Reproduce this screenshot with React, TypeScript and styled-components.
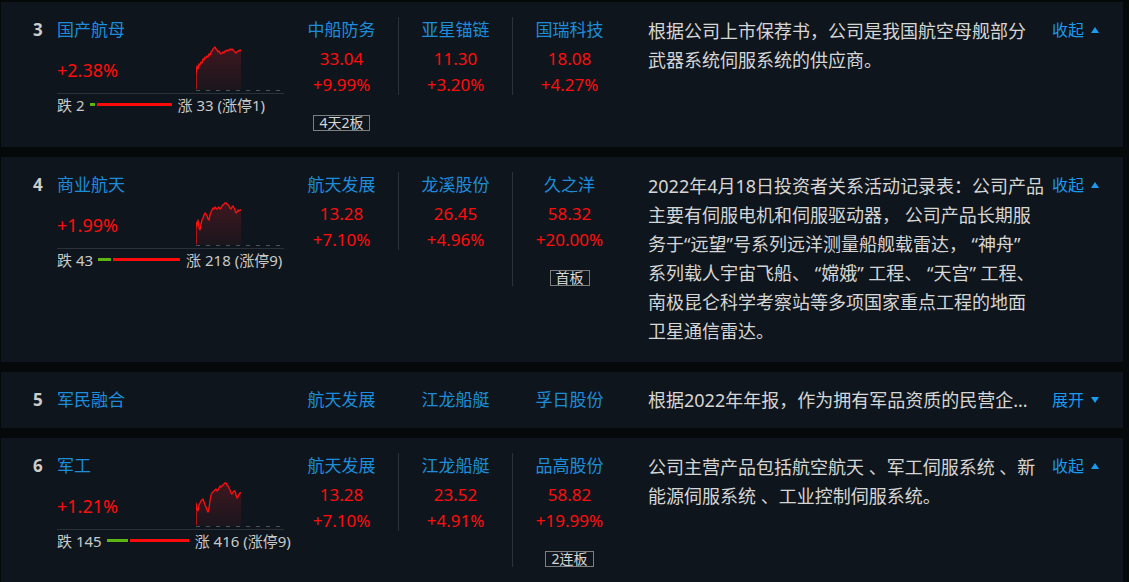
import React, { useState } from 'react';
import styled, { createGlobalStyle, css } from 'styled-components';

type Stock = { name: string; price: string; pct: string; tag?: string };
type Sector = {
  rank: number;
  name: string;
  pct: string;
  down: number;
  up: number;
  limitUp: number;
  spark: number[][];
  stocks: Stock[];
  desc: string[];
  summary: string;
};

const GlobalStyle = createGlobalStyle`
  body {
    margin: 0;
    background: #060909;
    font-family: "Noto Sans", "Noto Sans CJK SC", sans-serif;
  }
`;

const List = styled.div`
  display: flex;
  flex-direction: column;
  gap: 10px;
  padding: 2px 6px 0 1px;
`;

const Card = styled.div<{ $collapsed?: boolean }>`
  display: flex;
  align-items: ${({ $collapsed }) => ($collapsed ? 'center' : 'flex-start')};
  background: #0f151c;
  padding: ${({ $collapsed }) => ($collapsed ? '15px 26px 15px 32px' : '15px 26px 16px 32px')};
`;

const Rank = styled.div`
  width: 24px;
  flex: none;
  font-size: 17px;
  font-weight: 700;
  line-height: 26px;
  color: #cdcdcd;
`;

const SectorBox = styled.div`
  width: 227px;
  flex: none;
`;

const SectorName = styled.div`
  font-size: 17px;
  line-height: 26px;
  color: #1d8ddb;
`;

const ChartRow = styled.div`
  display: flex;
  justify-content: space-between;
  align-items: center;
  height: 50px;
  border-bottom: 1px solid #2a3138;
`;

const SectorPct = styled.div`
  font-size: 18px;
  padding-top: 4px;
  color: #ff0d0d;
`;

const Spark = styled.svg`
  display: block;
  align-self: flex-start;
  margin-top: 2px;
`;

const Breadth = styled.div`
  display: flex;
  align-items: center;
  height: 20px;
  font-size: 15px;
  color: #c9c9c9;
  white-space: nowrap;
`;

const BreadthBar = styled.div`
  display: flex;
  align-items: center;
  gap: 2px;
  margin: 0 6px 0 5px;
`;

const Seg = styled.div<{ $up?: boolean }>`
  height: 3px;
  background: ${({ $up }) => ($up ? '#ff0a0a' : '#5db511')};
`;

const Stocks = styled.div`
  display: flex;
  align-items: flex-start;
  width: 342px;
  flex: none;
`;

const StockCol = styled.div<{ $divider?: boolean }>`
  box-sizing: border-box;
  width: 114px;
  display: flex;
  flex-direction: column;
  align-items: center;
  border-left: 1px solid ${({ $divider }) => ($divider ? '#2b3239' : 'transparent')};
`;

const StockName = styled.div`
  font-size: 17px;
  line-height: 26px;
  color: #1d8ddb;
`;

const StockPrice = styled.div`
  padding-top: 2px;
  font-size: 17px;
  line-height: 27px;
  color: #ff0d0d;
`;

const StockPct = styled.div`
  font-size: 17px;
  line-height: 26px;
  margin-bottom: -3px;
  color: #ff0d0d;
`;

const Tag = styled.div`
  margin-top: 20px;
  padding: 0 5px;
  border: 1px solid #7f7f7f;
  font-size: 14px;
  line-height: 14px;
  color: #d6d6d6;
`;

const Desc = styled.div`
  width: 396px;
  flex: none;
  margin-left: 22px;
  font-size: 18px;
  line-height: 29px;
  color: #d6d6d6;
`;

const DescLine = styled.span`
  display: block;
  white-space: nowrap;
`;

const Summary = styled.div`
  white-space: nowrap;
  line-height: 26px;
`;

const Toggle = styled.button`
  display: flex;
  align-items: center;
  gap: 7px;
  flex: none;
  margin: 0 0 0 8px;
  padding: 0;
  background: none;
  border: 0;
  font-family: inherit;
  font-size: 16px;
  line-height: 26px;
  color: #1a9bf0;
  cursor: pointer;
`;

const Caret = styled.span<{ $open?: boolean }>`
  width: 0;
  height: 0;
  border-left: 4.5px solid transparent;
  border-right: 4.5px solid transparent;
  ${({ $open }) =>
    $open
      ? css`
          border-bottom: 6px solid #1a9bf0;
        `
      : css`
          border-top: 6px solid #1a9bf0;
        `}
`;

const sectors: Sector[] = [
  {
    rank: 3,
    name: '国产航母',
    pct: '+2.38%',
    down: 2,
    up: 33,
    limitUp: 1,
    spark: [
      [0, 44], [0, 30], [1, 21], [2, 24], [3, 19], [4, 20], [5, 17], [6, 18], [7, 14], [8, 15],
      [9, 12], [10, 13], [11, 11], [12, 12], [13, 9], [14, 10], [15, 7], [16, 6], [17, 4], [18, 3],
      [19, 2], [20, 4], [21, 5], [22, 7], [23, 6], [24, 8], [25, 9], [26, 8], [27, 7], [28, 8],
      [29, 6], [30, 6], [31, 5], [32, 6], [33, 5], [34, 4], [35, 5], [36, 4], [37, 5], [38, 6],
      [39, 7], [40, 8], [41, 7], [42, 6], [43, 6], [44, 5], [45, 6],
    ],
    stocks: [
      { name: '中船防务', price: '33.04', pct: '+9.99%', tag: '4天2板' },
      { name: '亚星锚链', price: '11.30', pct: '+3.20%' },
      { name: '国瑞科技', price: '18.08', pct: '+4.27%' },
    ],
    desc: ['根据公司上市保荐书，公司是我国航空母舰部分', '武器系统伺服系统的供应商。'],
    summary: '根据公司上市保荐书，公司是我国航空母舰部分...',
  },
  {
    rank: 4,
    name: '商业航天',
    pct: '+1.99%',
    down: 43,
    up: 218,
    limitUp: 9,
    spark: [
      [0, 44], [0, 22], [1, 26], [2, 20], [3, 28], [4, 30], [5, 24], [6, 20], [7, 18], [8, 15],
      [9, 13], [10, 14], [11, 16], [12, 19], [13, 20], [14, 15], [15, 12], [16, 10], [17, 8], [18, 9],
      [19, 7], [20, 8], [21, 9], [22, 8], [23, 7], [24, 9], [25, 8], [26, 6], [27, 5], [28, 4],
      [29, 3], [30, 3], [31, 4], [32, 5], [33, 6], [34, 8], [35, 9], [36, 7], [37, 6], [38, 8],
      [39, 10], [40, 13], [41, 12], [42, 10], [43, 11], [44, 10], [45, 10],
    ],
    stocks: [
      { name: '航天发展', price: '13.28', pct: '+7.10%' },
      { name: '龙溪股份', price: '26.45', pct: '+4.96%' },
      { name: '久之洋', price: '58.32', pct: '+20.00%', tag: '首板' },
    ],
    desc: [
      '2022年4月18日投资者关系活动记录表：公司产品',
      '主要有伺服电机和伺服驱动器， 公司产品长期服',
      '务于“远望”号系列远洋测量船舰载雷达， “神舟”',
      '系列载人宇宙飞船、 “嫦娥” 工程、 “天宫” 工程、',
      '南极昆仑科学考察站等多项国家重点工程的地面',
      '卫星通信雷达。',
    ],
    summary: '2022年4月18日投资者关系活动记录表：公司...',
  },
  {
    rank: 5,
    name: '军民融合',
    pct: '+1.46%',
    down: 61,
    up: 322,
    limitUp: 8,
    spark: [
      [0, 44], [0, 26], [4, 20], [8, 16], [12, 18], [16, 12], [20, 10], [24, 9], [28, 7], [32, 8],
      [36, 9], [40, 11], [45, 10],
    ],
    stocks: [
      { name: '航天发展', price: '13.28', pct: '+7.10%' },
      { name: '江龙船艇', price: '23.52', pct: '+4.91%' },
      { name: '孚日股份', price: '5.36', pct: '+10.06%' },
    ],
    desc: ['根据2022年年报，作为拥有军品资质的民营企业，', '公司产品广泛应用于航空航天、船舶等领域。'],
    summary: '根据2022年年报，作为拥有军品资质的民营企...',
  },
  {
    rank: 6,
    name: '军工',
    pct: '+1.21%',
    down: 145,
    up: 416,
    limitUp: 9,
    spark: [
      [0, 44], [0, 22], [1, 28], [2, 30], [3, 24], [4, 22], [5, 20], [6, 19], [7, 18], [8, 21],
      [9, 24], [10, 26], [11, 29], [12, 31], [13, 27], [14, 20], [15, 14], [16, 12], [17, 11], [18, 10],
      [19, 9], [20, 8], [21, 10], [22, 9], [23, 7], [24, 5], [25, 6], [26, 5], [27, 4], [28, 3],
      [29, 2], [30, 2], [31, 4], [32, 5], [33, 7], [34, 9], [35, 12], [36, 13], [37, 11], [38, 10],
      [39, 10], [40, 14], [41, 17], [42, 16], [43, 13], [44, 12], [45, 12],
    ],
    stocks: [
      { name: '航天发展', price: '13.28', pct: '+7.10%' },
      { name: '江龙船艇', price: '23.52', pct: '+4.91%' },
      { name: '品高股份', price: '58.82', pct: '+19.99%', tag: '2连板' },
    ],
    desc: ['公司主营产品包括航空航天 、军工伺服系统 、新', '能源伺服系统 、工业控制伺服系统。'],
    summary: '公司主营产品包括航空航天 、军工伺服系统 、...',
  },
];

const Sparkline = ({ points, id }: { points: number[][]; id: string }) => {
  const line = points.map(([x, y]) => `${x},${y}`).join(' ');
  const last = points[points.length - 1];
  const area = `M0,45 L${line.replace(/ /g, ' L')} L${last[0]},45 Z`;
  return (
    <Spark width="88" height="47" viewBox="0 0 88 47">
      <defs>
        <linearGradient id={id} x1="0" y1="0" x2="0" y2="1">
          <stop offset="0" stopColor="#d41e2a" stopOpacity="0.24" />
          <stop offset="1" stopColor="#d41e2a" stopOpacity="0.06" />
        </linearGradient>
      </defs>
      <line x1="0" y1="45.5" x2="88" y2="45.5" stroke="#4d5358" strokeDasharray="4 6" />
      <path d={area} fill={`url(#${id})`} />
      <polyline points={line} fill="none" stroke="#ff1010" strokeWidth="1.3" strokeLinejoin="round" />
    </Spark>
  );
};

const BAR_WIDTH = 80;

const SectorCard = ({ sector, open, onToggle }: { sector: Sector; open: boolean; onToggle: () => void }) => {
  const total = sector.down + sector.up;
  const downW = Math.max(5, Math.round((BAR_WIDTH * sector.down) / total));
  const upW = BAR_WIDTH - downW;

  return (
    <Card $collapsed={!open}>
      <Rank>{sector.rank}</Rank>
      <SectorBox>
        <SectorName>{sector.name}</SectorName>
        {open && (
          <>
            <ChartRow>
              <SectorPct>{sector.pct}</SectorPct>
              <Sparkline points={sector.spark} id={`spark-${sector.rank}`} />
            </ChartRow>
            <Breadth>
              跌 {sector.down}
              <BreadthBar>
                <Seg style={{ width: downW }} />
                <Seg $up style={{ width: upW }} />
              </BreadthBar>
              涨 {sector.up} (涨停{sector.limitUp})
            </Breadth>
          </>
        )}
      </SectorBox>
      <Stocks>
        {sector.stocks.map((s, i) => (
          <StockCol key={s.name} $divider={open && i > 0}>
            <StockName>{s.name}</StockName>
            {open && (
              <>
                <StockPrice>{s.price}</StockPrice>
                <StockPct>{s.pct}</StockPct>
                {s.tag && <Tag>{s.tag}</Tag>}
              </>
            )}
          </StockCol>
        ))}
      </Stocks>
      <Desc>
        {open ? sector.desc.map((l, i) => <DescLine key={i}>{l}</DescLine>) : <Summary>{sector.summary}</Summary>}
      </Desc>
      <Toggle onClick={onToggle}>
        {open ? '收起' : '展开'}
        <Caret $open={open} />
      </Toggle>
    </Card>
  );
};

export default function App() {
  const [openRanks, setOpenRanks] = useState<number[]>([3, 4, 6]);

  const toggle = (rank: number) =>
    setOpenRanks((prev) => (prev.includes(rank) ? prev.filter((r) => r !== rank) : [...prev, rank]));

  return (
    <>
      <GlobalStyle />
      <List>
        {sectors.map((s) => (
          <SectorCard key={s.rank} sector={s} open={openRanks.includes(s.rank)} onToggle={() => toggle(s.rank)} />
        ))}
      </List>
    </>
  );
}
